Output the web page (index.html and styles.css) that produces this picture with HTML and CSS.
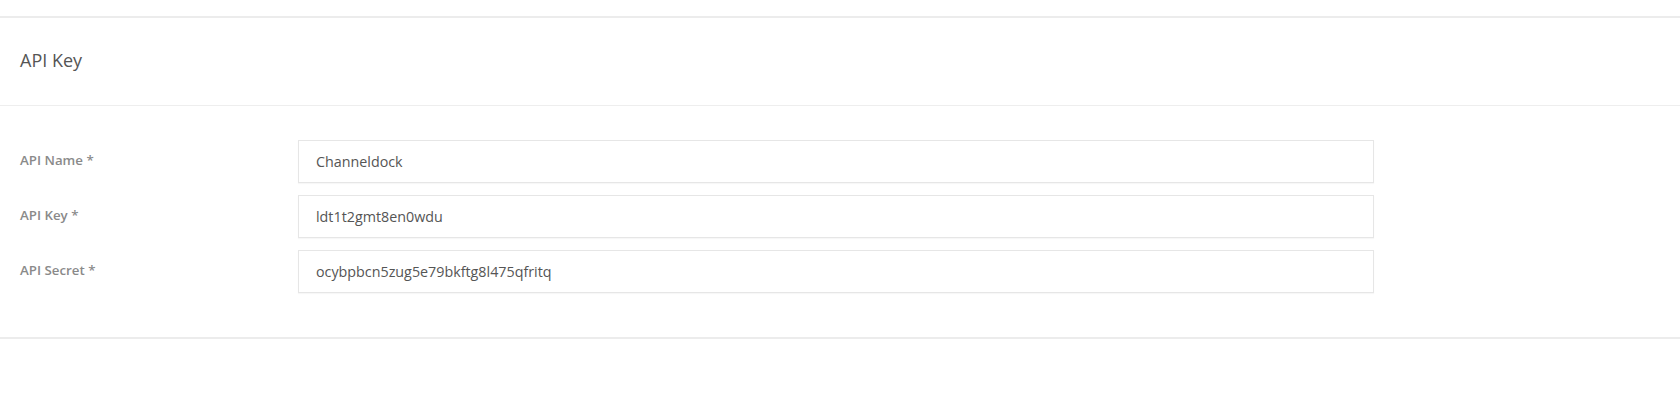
FILE: index.html
```html
<!DOCTYPE html>
<html lang="en">
<head>
  <meta charset="UTF-8">
  <meta name="viewport" content="width=device-width, initial-scale=1.0">
  <title>API Key</title>
  <link rel="stylesheet" href="styles.css">
</head>
<body>
  <div class="topbar"></div>

  <div class="panel">
    <div class="panel-header">
      <h2>API Key</h2>
    </div>

    <form class="panel-body" id="api-key-form">
      <div class="form-row">
        <label for="api-name">API Name *</label>
        <input type="text" id="api-name" name="api-name" value="Channeldock">
      </div>

      <div class="form-row">
        <label for="api-key">API Key *</label>
        <input type="text" id="api-key" name="api-key" value="ldt1t2gmt8en0wdu">
      </div>

      <div class="form-row">
        <label for="api-secret">API Secret *</label>
        <input type="text" id="api-secret" name="api-secret" value="ocybpbcn5zug5e79bkftg8l475qfritq">
      </div>
    </form>
  </div>
</body>
</html>
```

FILE: styles.css
```css
body {
  font-family: "Open Sans", Arial, sans-serif;
  background-color: #fff;
  margin: 0;
  padding: 0;
}

.topbar {
  height: 16px;
  border-bottom: 2px solid #ececec;
}

.panel {
  border-bottom: 2px solid #ececec;
}

.panel-header {
  box-sizing: border-box;
  height: 88px;
  padding: 0 20px 4px;
  display: flex;
  align-items: center;
  border-bottom: 1px solid #eeeeee;
}

.panel-header h2 {
  margin: 0;
  font-size: 18px;
  font-weight: 400;
  color: #555;
}

.panel-body {
  padding: 34px 20px 44px;
  display: flex;
  flex-direction: column;
  gap: 12px;
}

.form-row {
  display: grid;
  grid-template-columns: 278px 1076px;
  align-items: center;
}

.form-row label {
  font-size: 13.3px;
  font-weight: 600;
  color: #8a8a8a;
  padding-bottom: 3px;
}

.form-row input {
  box-sizing: border-box;
  height: 43px;
  width: 100%;
  padding: 0 17px;
  border: 1px solid #e6e6e6;
  border-radius: 0;
  box-shadow: 0 1px 1px rgba(0, 0, 0, 0.03);
  font-family: "Open Sans", Arial, sans-serif;
  font-size: 14.3px;
  color: #555;
  outline: none;
}
```
